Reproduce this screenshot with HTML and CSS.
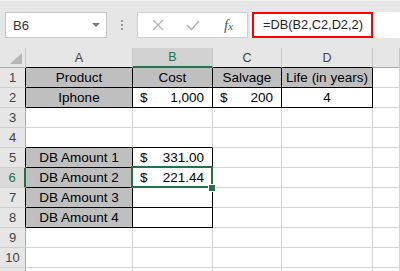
FILE: index.html
```html
<!DOCTYPE html>
<html lang="en">
<head>
    <meta charset="UTF-8">
    <meta name="viewport" content="width=device-width, initial-scale=1.0">
    <title>DB Function</title>
    <link rel="stylesheet" href="styles.css">
</head>
<body>
    <div class="toolbar">
        <div class="namebox">
            <span>B6</span>
            <span class="caret"></span>
        </div>
        <div class="grip">
            <span></span><span></span><span></span>
        </div>
        <div class="tools">
            <svg class="icon-cancel" width="12" height="12" viewBox="0 0 12 12">
                <path d="M1 1 L11 11 M11 1 L1 11" stroke="#b3b3b3" stroke-width="1.3" fill="none"/>
            </svg>
            <svg class="icon-enter" width="14" height="12" viewBox="0 0 14 12">
                <path d="M1 6 L5.5 10.5 L13 2" stroke="#b3b3b3" stroke-width="1.6" fill="none"/>
            </svg>
            <span class="fx">f<span>x</span></span>
        </div>
        <div class="formula">
            <div class="highlight">=DB(B2,C2,D2,2)</div>
        </div>
    </div>

    <div class="sheet">
        <!-- header row -->
        <div class="corner"><span class="tri"></span></div>
        <div class="h hb">A</div>
        <div class="h active">B</div>
        <div class="h hb">C</div>
        <div class="h hb">D</div>
        <div class="h"></div>

        <!-- row 1 -->
        <div class="r rb">1</div>
        <div class="c fill ctr bb br">Product</div>
        <div class="c fill ctr bb br">Cost</div>
        <div class="c fill ctr bb br">Salvage</div>
        <div class="c fill ctr bb br">Life (in years)</div>
        <div class="c"></div>

        <!-- row 2 -->
        <div class="r rb">2</div>
        <div class="c fill ctr bb br">Iphone</div>
        <div class="c acct bb br"><span>$</span><span>1,000</span></div>
        <div class="c acct bb br"><span>$</span><span>200</span></div>
        <div class="c ctr bb br">4</div>
        <div class="c"></div>

        <!-- row 3 -->
        <div class="r">3</div>
        <div class="c"></div>
        <div class="c"></div>
        <div class="c"></div>
        <div class="c"></div>
        <div class="c"></div>

        <!-- row 4 -->
        <div class="r">4</div>
        <div class="c bb"></div>
        <div class="c bb"></div>
        <div class="c"></div>
        <div class="c"></div>
        <div class="c"></div>

        <!-- row 5 -->
        <div class="r rb">5</div>
        <div class="c fill ctr bb br">DB Amount 1</div>
        <div class="c acct bb br"><span>$</span><span>331.00</span></div>
        <div class="c"></div>
        <div class="c"></div>
        <div class="c"></div>

        <!-- row 6 -->
        <div class="r active">6</div>
        <div class="c fill ctr bb br">DB Amount 2</div>
        <div class="c acct bb br selected">
            <span>$</span><span>221.44</span>
            <div class="sel-box"></div>
            <div class="sel-handle"></div>
        </div>
        <div class="c"></div>
        <div class="c"></div>
        <div class="c"></div>

        <!-- row 7 -->
        <div class="r rb">7</div>
        <div class="c fill ctr bb br">DB Amount 3</div>
        <div class="c bb br"></div>
        <div class="c"></div>
        <div class="c"></div>
        <div class="c"></div>

        <!-- row 8 -->
        <div class="r rb">8</div>
        <div class="c fill ctr bb br">DB Amount 4</div>
        <div class="c bb br"></div>
        <div class="c"></div>
        <div class="c"></div>
        <div class="c"></div>

        <!-- row 9 -->
        <div class="r">9</div>
        <div class="c"></div>
        <div class="c"></div>
        <div class="c"></div>
        <div class="c"></div>
        <div class="c"></div>

        <!-- row 10 -->
        <div class="r">10</div>
        <div class="c"></div>
        <div class="c"></div>
        <div class="c"></div>
        <div class="c"></div>
        <div class="c"></div>

        <!-- row 11, only its top edge shows -->
        <div class="r"></div>
        <div class="c"></div>
        <div class="c"></div>
        <div class="c"></div>
        <div class="c"></div>
        <div class="c"></div>
    </div>
</body>
</html>
```

FILE: styles.css
```css
body {
    margin: 0;
    width: 400px;
    height: 271px;
    overflow: hidden;
    background: #ffffff;
    font-family: 'Liberation Sans', Arial, sans-serif;
    color: #000;
}

/* formula bar */
.toolbar {
    height: 48px;
    box-sizing: border-box;
    display: flex;
    align-items: flex-start;
    padding: 12px 0 0 5px;
    background: #e6e6e6;
    border-top: 1px solid #f2f2f2;
}

.namebox {
    width: 102px;
    height: 26px;
    box-sizing: border-box;
    margin-top: -1px;
    display: flex;
    align-items: center;
    justify-content: space-between;
    padding: 0 6px 0 7px;
    background: #fff;
    border: 1px solid #c6c6c6;
    font-size: 13px;
    color: #333;
}

.caret {
    width: 0;
    height: 0;
    border-left: 4px solid transparent;
    border-right: 4px solid transparent;
    border-top: 4px solid #777;
}

.grip {
    width: 30px;
    height: 26px;
    margin-top: -1px;
    display: flex;
    flex-direction: column;
    align-items: center;
    justify-content: center;
    gap: 2px;
}

.grip span {
    width: 2px;
    height: 2px;
    background: #9a9a9a;
}

.tools {
    width: 111px;
    height: 26px;
    box-sizing: border-box;
    margin-top: -1px;
    display: flex;
    align-items: center;
    background: #fff;
    border: 1px solid #d0d0d0;
}

.icon-cancel {
    margin-left: 14px;
}

.icon-enter {
    margin-left: 22px;
}

.fx {
    margin-left: 24px;
    font-family: 'Liberation Serif', 'Times New Roman', serif;
    font-style: italic;
    font-size: 15px;
    color: #555;
}

.fx span {
    font-size: 11px;
}

.formula {
    flex: 1;
    height: 26px;
    margin: -1px 0 0 2px;
    box-sizing: border-box;
    padding-left: 2px;
    background: #fff;
}

.highlight {
    width: 121px;
    height: 26px;
    box-sizing: border-box;
    padding: 0 0 0 9px;
    border: 2px solid #ff0000;
    font-size: 12.8px;
    line-height: 22px;
    color: #222;
}

/* spreadsheet grid */
.sheet {
    display: grid;
    grid-template-columns: 26px 107px 80px 69px 91px 1fr;
    grid-auto-rows: 20px;
}

.sheet > div {
    box-sizing: border-box;
    border-right: 1px solid #d4d4d4;
    border-bottom: 1px solid #d4d4d4;
}

.corner {
    position: relative;
    background: #e6e6e6;
    border-right-color: #c8c8c8 !important;
    border-bottom-color: #ababab !important;
}

.tri {
    position: absolute;
    right: 3px;
    bottom: 3px;
    width: 0;
    height: 0;
    border-left: 12px solid transparent;
    border-bottom: 11px solid #b5b5b5;
}

.h {
    background: #e6e6e6;
    display: flex;
    align-items: center;
    justify-content: center;
    font-size: 12.5px;
    color: #444;
    border-right-color: #c8c8c8 !important;
    border-bottom-color: #ababab !important;
}

.h.hb {
    border-bottom-color: #000 !important;
}

.h.active {
    background: #d2d2d2;
    color: #217346;
    border-bottom: 2px solid #217346 !important;
}

.r {
    background: #e6e6e6;
    display: flex;
    align-items: center;
    justify-content: center;
    font-size: 13px;
    color: #444;
    border-right-color: #ababab !important;
    border-bottom-color: #d0d0d0 !important;
}

.r.rb {
    border-right-color: #000 !important;
}

.r.active {
    background: #dadada;
    color: #217346;
    border-right: 2px solid #217346 !important;
}

.c {
    display: flex;
    align-items: flex-end;
    padding-bottom: 1px;
    font-size: 13.5px;
    line-height: 16px;
    white-space: nowrap;
}

.fill {
    background: #bfbfbf;
}

.ctr {
    justify-content: center;
}

.acct {
    justify-content: space-between;
    padding-left: 7px;
    padding-right: 8px;
}

.sheet > .bb {
    border-bottom-color: #000;
}

.sheet > .br {
    border-right-color: #000;
}

/* active cell selection */
.selected {
    position: relative;
}

.sel-box {
    position: absolute;
    left: -2px;
    top: -2px;
    width: 82px;
    height: 22px;
    box-sizing: border-box;
    border: 2px solid #217346;
}

.sel-handle {
    position: absolute;
    left: 75px;
    top: 16px;
    width: 6px;
    height: 6px;
    background: #217346;
    border: 1px solid #fff;
}
```
